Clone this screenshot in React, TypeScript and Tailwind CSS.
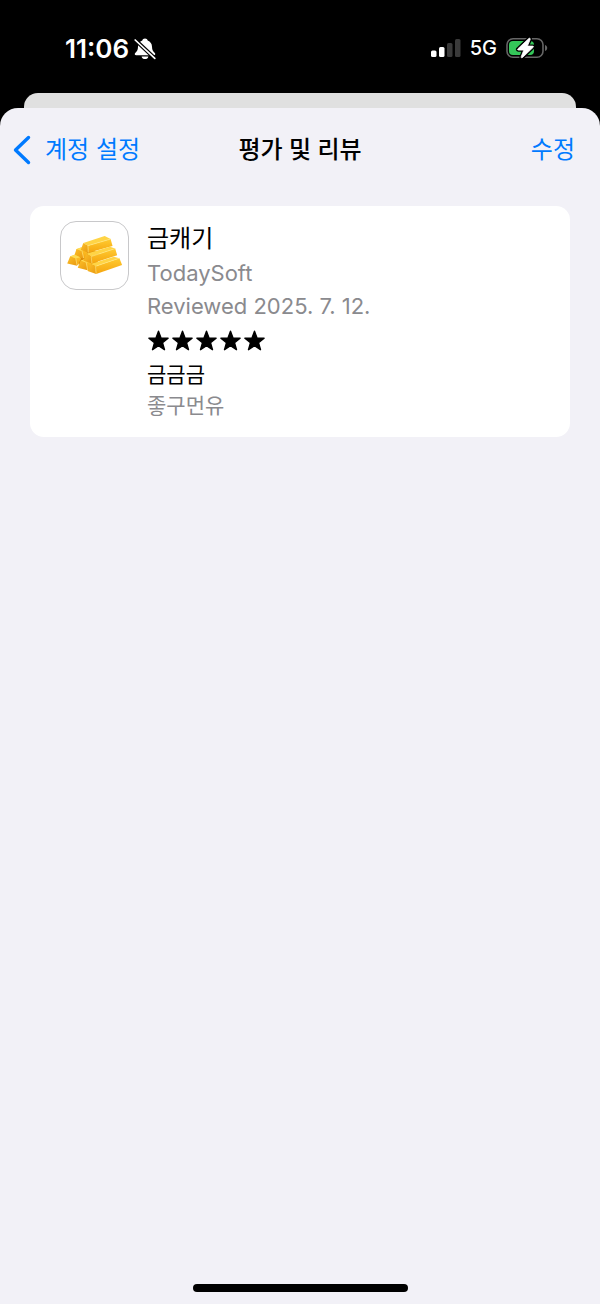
import React from 'react';

const SilentBellIcon: React.FC = () => (
  <svg viewBox="0 0 22 22" className="w-[22px] h-[22px]" aria-hidden="true">
    <path
      d="M11 .6c-1.400 0-2.500.8-2.700 2C5.500 3.600 4.100 5.900 4 8.700c-.1 3.400-1 4.700-2.800 6.300-.9.900-.5 2.300 1 2.300h17.600c1.500 0 1.900-1.400 1-2.300-1.800-1.600-2.700-2.900-2.800-6.300-.1-2.800-1.500-5.100-4.300-6.100C13.500 1.400 12.400.6 11 .6z"
      fill="#fff"
    />
    <path d="M7.600 18.400h6.800c-.4 1.700-1.700 2.700-3.400 2.700s-3-1-3.400-2.700z" fill="#fff" />
    <path d="M1.200 2l19.600 18.300" stroke="#000" strokeWidth="4" />
    <path d="M1.200 2l19.600 18.300" stroke="#fff" strokeWidth="1.700" strokeLinecap="round" />
  </svg>
);

const SignalIcon: React.FC = () => (
  <svg viewBox="0 0 30 20" className="w-[30px] h-[20px]" aria-hidden="true">
    <rect x="0" y="12.500" width="5.500" height="6.500" rx="1.500" fill="#fff" />
    <rect x="8" y="9" width="5.500" height="10" rx="1.500" fill="#fff" />
    <rect x="16" y="5" width="5.500" height="14" rx="1.500" fill="#3a3a3a" />
    <rect x="24" y="1" width="5.500" height="18" rx="1.500" fill="#3a3a3a" />
  </svg>
);

const BOLT =
  'M22.800 2.500L11.800 12.900c-.5.500-.2 1.200.5 1.200h5.500l-2.600 6.600c-.4 1 .6 1.500 1.300.8L27.200 11.300c.5-.5.2-1.200-.5-1.200h-5.300l2.800-6.600c.4-1-.6-1.700-1.400-1z';

const BatteryIcon: React.FC = () => (
  <svg viewBox="0 0 42 24" className="w-[42px] h-[24px]" aria-hidden="true">
    <rect x="1" y="2.800" width="36" height="18.400" rx="6" fill="none" stroke="#666" strokeWidth="1.600" />
    <path d="M39 9c1.600.5 2.200 1.600 2.200 3s-.6 2.500-2.200 3z" fill="#666" />
    <rect x="3" y="5" width="25" height="14" rx="4" fill="#34c759" />
    <path d={BOLT} fill="#000" stroke="#000" strokeWidth="3.400" strokeLinejoin="round" />
    <path d={BOLT} fill="#fff" stroke="#fff" strokeWidth="0.800" />
  </svg>
);

const BackIcon: React.FC = () => (
  <svg viewBox="0 0 18 30" className="w-[18px] h-[30px]" aria-hidden="true">
    <path
      d="M15.500 2.500L2.500 15l13 12.500"
      fill="none"
      stroke="currentColor"
      strokeWidth="3.400"
      strokeLinecap="round"
      strokeLinejoin="round"
    />
  </svg>
);

const StarIcon: React.FC = () => (
  <svg viewBox="0 0 24 24" className="w-6 h-6" aria-hidden="true">
    <path
      d="M11.500 2.200l2.500 6.900 7.100.2-5.600 4.400 2 7-6-4-6 4 2-7-5.600-4.400 7.100-.2z"
      fill="currentColor"
      stroke="currentColor"
      strokeWidth="1.400"
      strokeLinejoin="round"
    />
  </svg>
);

const GoldBarsIcon: React.FC = () => (
  <svg viewBox="30 34 204 204" className="w-full h-full" aria-hidden="true">
    <defs>
      <linearGradient id="goldSide" x1="0" y1="0" x2="0" y2="1">
        <stop offset="0" stopColor="#ffcb31" />
        <stop offset="1" stopColor="#f5a50f" />
      </linearGradient>
      <linearGradient id="goldEnd" x1="0" y1="0" x2="1" y2="1">
        <stop offset="0" stopColor="#fdc02a" />
        <stop offset="1" stopColor="#e99a10" />
      </linearGradient>
    </defs>

    {/* Shadow between the bars */}
    <path d="M72 138l25-20 50 6-10 58-27-4-30-20z" fill="#d98b0a" />

    {/* Short bars seen from the end */}
    <path d="M77 117l17-6 17 11-7 22-12-4z" fill="url(#goldSide)" />
    <path d="M70 138l7-22 17 6 5 23z" fill="url(#goldEnd)" />
    <path d="M77 116l13-4 19 8-15 3z" fill="#ffdc55" />
    <path d="M94 123l5 21" stroke="#ffe785" strokeWidth="2" />

    <path d="M58 139l15-5 18 10-9 22-7-2z" fill="url(#goldSide)" />
    <path d="M49 160l9-22 17 6 4 23z" fill="url(#goldEnd)" />
    <path d="M58 138l13-4 18 7-14 4z" fill="#ffdc55" />
    <path d="M75 145l4 21" stroke="#ffe785" strokeWidth="2" />

    <path d="M90 152l16-6 18 12-10 24-8-3z" fill="url(#goldSide)" />
    <path d="M81 173l9-22 17 6 4 24z" fill="url(#goldEnd)" />
    <path d="M90 151l14-4 18 7-15 4z" fill="#ffdc55" />
    <path d="M107 158l4 22" stroke="#ffe785" strokeWidth="2" />

    {/* Top bar */}
    <path d="M112 106l69-20 6 21-74 21z" fill="url(#goldSide)" />
    <path d="M98 98l65-21 18 9-69 20z" fill="#ffd445" />
    <path d="M90 119l8-21 14 8 1 22z" fill="url(#goldEnd)" />
    <path d="M112 106l69-20M112 106l1 21" stroke="#ffe680" strokeWidth="2" />

    {/* Middle bar */}
    <path d="M122 139l73-24 6 20-77 25z" fill="url(#goldSide)" />
    <path d="M107 131l72-22 16 6-73 24z" fill="#ffd445" />
    <path d="M98 152l9-21 15 8 2 21z" fill="url(#goldEnd)" />
    <path d="M122 139l73-24M122 139l2 20" stroke="#ffe680" strokeWidth="2" />

    {/* Bottom bar */}
    <path d="M135 169l73-25 8 21-79 27z" fill="url(#goldSide)" />
    <path d="M120 162l71-22 17 4-73 25z" fill="#ffd445" />
    <path d="M111 183l9-21 15 7 2 23z" fill="url(#goldEnd)" />
    <path d="M135 169l73-25M135 169l2 22" stroke="#ffe680" strokeWidth="2" />
  </svg>
);

const StatusBar: React.FC = () => (
  <div className="h-[93px] shrink-0 pl-[65px] pr-[52px] pt-1 flex items-center justify-between text-white">
    <div className="flex items-center gap-[5px]">
      <span className="text-[26px] leading-8 font-semibold">11:06</span>
      <SilentBellIcon />
    </div>
    <div className="flex items-center gap-[9px] pb-[2px]">
      <SignalIcon />
      <span className="text-xl font-medium">5G</span>
      <BatteryIcon />
    </div>
  </div>
);

const ReviewCard: React.FC = () => (
  <article className="mx-[30px] bg-white rounded-[14px] px-[30px] pt-[15px] pb-[15px] flex items-start gap-[18px]">
    <div className="w-[69px] h-[69px] shrink-0 rounded-2xl border border-[#c8c8ca] overflow-hidden">
      <GoldBarsIcon />
    </div>
    <div className="flex-1 min-w-0 text-[22px] leading-[33px]">
      <h2 className="text-2xl leading-9 text-black">금캐기</h2>
      <p className="text-[#8a8a8e]">TodaySoft</p>
      <p className="text-[#8a8a8e]">Reviewed 2025. 7. 12.</p>
      <div className="h-9 flex items-center text-black" role="img" aria-label="5/5">
        {[1, 2, 3, 4, 5].map((n) => (
          <StarIcon key={n} />
        ))}
      </div>
      <h3 className="text-[21px] leading-[31px] text-black">금금금</h3>
      <p className="text-[21px] leading-8 text-[#8a8a8e]">좋구먼유</p>
    </div>
  </article>
);

export default function App() {
  return (
    <div className="min-h-screen flex flex-col bg-black font-['Inter','Noto_Sans_CJK_KR',sans-serif]">
      <StatusBar />
      <div className="mx-6 h-[15px] shrink-0 rounded-t-[14px] bg-[#e0e0e0]" />
      <main className="flex-1 flex flex-col rounded-t-[18px] bg-[#f2f1f7]">
        <header className="h-[98px] pb-[14px] px-[13px] grid grid-cols-[1fr_auto_1fr] items-center text-2xl">
          <button type="button" className="justify-self-start flex items-center gap-[14px] text-[#007aff]">
            <BackIcon />
            <span>계정 설정</span>
          </button>
          <h1 className="font-medium text-black">평가 및 리뷰</h1>
          <button type="button" className="justify-self-end pr-3 text-[#007aff]">
            수정
          </button>
        </header>
        <ReviewCard />
        <div className="mt-auto mx-auto mb-3 w-[215px] h-2 rounded-full bg-black" />
      </main>
    </div>
  );
}
